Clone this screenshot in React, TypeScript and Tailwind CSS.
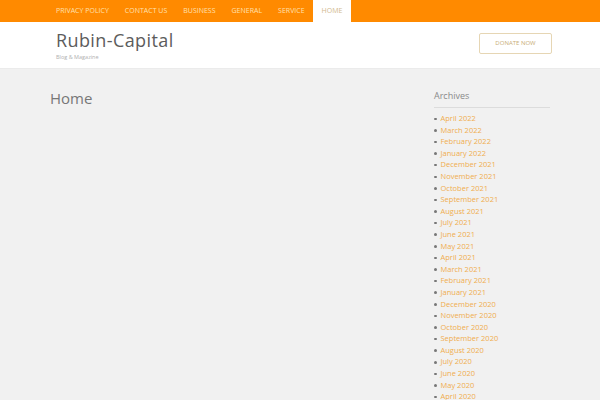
import React from 'react'

const navItems = ['PRIVACY POLICY', 'CONTACT US', 'BUSINESS', 'GENERAL', 'SERVICE', 'HOME']

const archives = [
  'April 2022',
  'March 2022',
  'February 2022',
  'January 2022',
  'December 2021',
  'November 2021',
  'October 2021',
  'September 2021',
  'August 2021',
  'July 2021',
  'June 2021',
  'May 2021',
  'April 2021',
  'March 2021',
  'February 2021',
  'January 2021',
  'December 2020',
  'November 2020',
  'October 2020',
  'September 2020',
  'August 2020',
  'July 2020',
  'June 2020',
  'May 2020',
  'April 2020',
]

export default function App() {
  return (
    <div className="h-[400px] w-[600px] overflow-hidden bg-[#f1f1f1] font-['Open_Sans',sans-serif]">
      {/* top menu */}
      <nav className="flex h-[22px] bg-[#ff8a00] pl-[48px]">
        {navItems.map((item) => {
          const active = item === 'HOME'
          return (
            <a
              key={item}
              className={
                active
                  ? 'flex items-center bg-white px-[9px] text-[7px] text-[#d2b98e]'
                  : 'flex items-center px-[8px] text-[7px] text-[#ffe0b0]'
              }
            >
              {item}
            </a>
          )
        })}
      </nav>

      {/* site header */}
      <header className="flex h-[47px] items-center justify-between border-b border-[#ebebeb] bg-white pl-[56px] pr-[48px]">
        <div className="flex flex-col">
          <span className="text-[18px] leading-[20px] tracking-[0.4px] text-[#5c5c5c]">Rubin-Capital</span>
          <span className="mt-[3px] text-[5.5px] leading-[8px] text-[#b0b0b0]">Blog &amp; Magazine</span>
        </div>
        <button className="mt-[-4px] h-[21px] w-[73px] rounded-[2px] border border-[#e6d6b4] text-[6px] text-[#c9ad78]">
          DONATE NOW
        </button>
      </header>

      {/* content */}
      <div className="flex pl-[50px] pr-[50px] pt-[20px]">
        <main className="flex-1">
          <h1 className="mt-[-1px] text-[15px] leading-[20px] text-[#777]">Home</h1>
        </main>
        <aside className="w-[116px] pt-[1px]">
          <h2 className="border-b border-[#dcdcdc] pb-[5px] text-[9px] leading-[12px] text-[#8a8a8a]">Archives</h2>
          <ul className="mt-[5px] text-[7.5px] leading-[11.6px] text-[#f0ad4e]">
            {archives.map((a) => (
              <li key={a} className="flex items-center">
                <span className="mr-[4px] h-[2.5px] w-[2.5px] rounded-full bg-[#777]" />
                <a>{a}</a>
              </li>
            ))}
          </ul>
        </aside>
      </div>
    </div>
  )
}
